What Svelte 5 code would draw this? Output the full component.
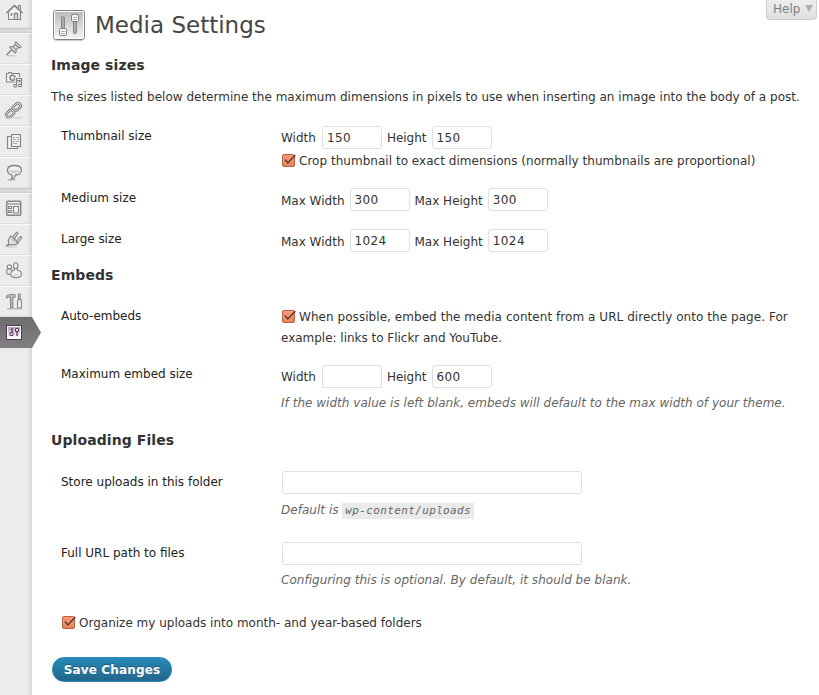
<script>
  const groups = [
    ['home'],
    ['pin', 'media', 'link', 'pages', 'comments'],
    ['appearance', 'plugins', 'users', 'tools', 'settings']
  ];
</script>

{#snippet check()}
  <svg class="check" width="14" height="13" viewBox="0 0 14 13" role="img" aria-label="checked">
    <defs><linearGradient id="orange" x2="0" y2="1"><stop stop-color="#fa9a76" /><stop offset="1" stop-color="#e8805a" /></linearGradient></defs>
    <rect x=".5" y=".5" width="12" height="12" rx="1.5" fill="url(#orange)" stroke="#b5623f" />
    <path d="M2.3 6 5.8 9.3 12.6 1.2" fill="none" stroke="#ffb090" stroke-width="2.8" />
    <path d="M2.8 5.7 5.8 9 13.2 1.2" fill="none" stroke="#6b3a2b" stroke-width="1.8" />
  </svg>
{/snippet}

{#snippet icon(name)}
  <svg class="icon" width="20" height="20" viewBox="0 0 20 20" fill="#f0f0f0" stroke="#858585" stroke-width="1.1" stroke-linejoin="round" aria-hidden="true">
    {#if name === 'home'}
      <path d="M4.5 9v8.5h12V9l-6-5.5z" /><path d="M14.5 6V3.5h2V8" /><path d="m2.5 11 8-7.5 8 7.5" fill="none" stroke-width="1.6" /><path d="M10.5 17v-5.500h3V17M7.500 11v3" fill="none" stroke-width="1.4" />
    {:else if name === 'pin'}
      <path d="M3 17.8h8" stroke="#bbb" /><path d="m2.5 17 5.5-5.500" stroke-width="1.5" /><path d="M5.500 9.200c1.500-1 2.700-.7 3.500-.4l2.300-2.300c-.4-1-.2-2 .6-2.700l5.300 5c-.8.9-1.800 1-2.800.7L12 11.800c.4 1.200.2 2.300-.8 3.200z" fill="#e4e4e4" /><path d="m9 8.800 3 3m-.7-5.300 3.100 3" fill="none" />
    {:else if name === 'media'}
      <path d="M2.5 4.5h2v-1h3v1h8V13h-13z" /><circle cx="8.5" cy="8.7" r="2.500" stroke-width="1.5" /><path d="M12.5 16.500V9.500h5V16" fill="none" stroke="#eee" stroke-width="3.200" /><path d="M12.500 16.500V9.500h5V16m-5-4.500h5" fill="none" stroke-width="1.200" /><ellipse cx="11.3" cy="16.7" rx="1.6" ry="1.300" /><ellipse cx="16.2" cy="16.4" rx="1.600" ry="1.300" />
    {:else if name === 'link'}
      <path d="M9 17.800h9" stroke="#ccc" />
      <g fill="none" stroke="#808080" stroke-width="2.800"><rect x="8.700" y="4.300" width="8.200" height="5.200" rx="2.600" transform="rotate(-42 12.800 6.900)" /><rect x="2" y="11" width="8.200" height="5.200" rx="2.600" transform="rotate(-42 6.100 13.600)" /></g>
      <g fill="none" stroke="#e4e4e4" stroke-width=".9"><rect x="8.700" y="4.300" width="8.200" height="5.200" rx="2.600" transform="rotate(-42 12.800 6.900)" /><rect x="2" y="11" width="8.200" height="5.200" rx="2.600" transform="rotate(-42 6.100 13.600)" /></g>
    {:else if name === 'pages'}
      <path d="M3.5 5.5h10v12h-10z" stroke-width="1.200" /><path d="M7.5 3.5h9v12h-9z" stroke-width="1.200" /><path d="M9 6.5h2m1 0h3m-6 2h3m1 0h2m-6 2h2m1 0h3m-6 2h4" stroke="#aaa" />
    {:else if name === 'comments'}
      <path d="M10.5 3.5c4.5 0 7 2.100 7 4.800s-2.800 4.600-6 4.700c-.4 2.100-2 4-4.500 4.500 1.300-1.400 1.500-2.500 1.300-4.300C5.500 12.600 3.500 10.900 3.500 8.300c0-2.700 2.500-4.800 7-4.800z" stroke-width="1.300" /><path d="M5 8.500c1 3.500 10 3.500 11 0z" fill="#ccc" stroke="none" /><path d="M3.500 17.800h8" stroke="#aaa" />
    {:else if name === 'appearance'}
      <rect x="2.7" y="3.2" width="14" height="14" rx="1" stroke-width="1.5" /><path d="M3.5 6h12.5" /><path d="M4.5 8.500h3v2h-3zm0 4h3v2h-3zm5-4h5v6.500h-5z" />
    {:else if name === 'plugins'}
      <path d="M2 16.5c3 1.200 2.300-3 4.800-2.800" fill="none" stroke-width="1.7" /><path d="m8.800 8.200 3.900-5 1.300 1.200-3.500 5.500zm3.700 3.600 4.200-4.500 1.300 1.200-3.800 5z" /><path d="M7 6.800 14.300 14c-1.900 1.500-4.800 2.400-7.700 1.600-.9.500-1.800.2-1.900-.8C3.900 12 4.800 9 7 6.800z" fill="#e2e2e2" /><path d="m7.500 10 3.200 3.200" stroke="#bbb" /><path d="M4 18h9" stroke="#ccc" />
    {:else if name === 'users'}
      <circle cx="5.4" cy="6.9" r="2.1" /><path d="M3 10.200c1.600-2 4.500-1.500 5 .7v3.200c-2.200.8-5.200.4-5.500-1.600z" /><path d="M10.300 7.500h3v2.700c3.200.3 4.500 2.500 4.100 4.700-.7 3.400-9 3.600-10.500.7-.8-2.400.4-5.100 3.400-5.400z" /><ellipse cx="11.700" cy="5.800" rx="2.200" ry="3" /><path d="M9 14.800h6" stroke="#ccc" />
    {:else if name === 'tools'}
      <path d="M2.5 5c1.500-1.700 4-2 8.500-1.200v2.400H8.800V17H6.500V6.300C4.700 5.800 3.600 6 2.500 7z" fill="#c4c4c4" /><path d="M14.500 3h1.600v5h-1.600zM14 8.500h3l.5 3.200V17h-4v-5.300z" /><path d="M3 17.800h15" stroke="#aaa" />
    {:else}
      <defs><linearGradient id="plum" x2="0" y2="1"><stop stop-color="#b99abb" /><stop offset="1" stop-color="#fff" /></linearGradient></defs>
      <g stroke="none"><rect x="2" y="2" width="16" height="15" rx="1" fill="#58305a" /><rect x="3" y="3" width="14" height="13" fill="#fff" /><rect x="4" y="4" width="12" height="11" fill="url(#plum)" /></g>
      <g stroke="#58305a" fill="#fff"><path d="M8 5v6m5-3v5" stroke-width="1.300" /><rect x="6" y="9.500" width="3" height="3" rx="1" /><rect x="11.500" y="5.500" width="3" height="3" rx="1" /></g>
    {/if}
  </svg>
{/snippet}

{#snippet size(name, value)}
  <label>{name}<input type="text" {value} /></label>
{/snippet}

<div class="page">
  <nav>
    {#each groups as group, i}
      {#if i}<div class="separator"></div>{/if}
      {#each group as name}
        <div class="item {name}" class:active={name === 'settings'}>{@render icon(name)}</div>
      {/each}
    {/each}
  </nav>
  <main>
    <button class="help">Help <i></i></button>
    <header>
      <svg width="34" height="34" viewBox="0 0 34 34" aria-hidden="true">
        <defs><linearGradient id="steel" x2="0" y2="1"><stop stop-color="#bbb" /><stop offset="1" stop-color="#f3f3f3" /></linearGradient></defs>
        <path d="M3 32.500h28" stroke="#ccc" />
        <rect x="1.5" y="2.5" width="31" height="29" rx="2" fill="#fff" stroke="#808080" />
        <rect x="3" y="4" width="28" height="26" fill="url(#steel)" />
        <g stroke="#858585"><rect x="9.5" y="8.500" width="3" height="13" rx="1" fill="#aaa" /><rect x="21.500" y="12.500" width="3" height="13" rx="1" fill="#aaa" /><rect x="7.500" y="20.500" width="7" height="7" rx="1.500" fill="#fff" /><rect x="19.500" y="6.500" width="7" height="7" rx="1.500" fill="#fff" /></g>
        <path d="M9 23.500h4m-4 2h4M21 9.500h4m-4 2h4" stroke="#aaa" />
      </svg>
      <h1>Media Settings</h1>
    </header>

    <h2>Image sizes</h2>
    <p class="intro">The sizes listed below determine the maximum dimensions in pixels to use when inserting an image into the body of a post.</p>
    <section class="row thumb">
      <h3>Thumbnail size</h3>
      <div>
        <div class="fields short">{@render size('Width', '150')}{@render size('Height', '150')}</div>
        <div class="option">{@render check()}Crop thumbnail to exact dimensions (normally thumbnails are proportional)</div>
      </div>
    </section>
    <section class="row medium">
      <h3>Medium size</h3>
      <div class="fields">{@render size('Max Width', '300')}{@render size('Max Height', '300')}</div>
    </section>
    <section class="row large">
      <h3>Large size</h3>
      <div class="fields">{@render size('Max Width', '1024')}{@render size('Max Height', '1024')}</div>
    </section>

    <h2>Embeds</h2>
    <section class="row auto">
      <h3>Auto-embeds</h3>
      <div class="option wrapped">{@render check()}When possible, embed the media content from a URL directly onto the page. For<br /><span>example: links to Flickr and YouTube.</span></div>
    </section>
    <section class="row embed">
      <h3>Maximum embed size</h3>
      <div>
        <div class="fields short">{@render size('Width', '')}{@render size('Height', '600')}</div>
        <p class="note">If the width value is left blank, embeds will default to the max width of your theme.</p>
      </div>
    </section>

    <h2>Uploading Files</h2>
    <section class="row store">
      <h3>Store uploads in this folder</h3>
      <div>
        <input class="wide" type="text" aria-label="Store uploads in this folder" />
        <p class="note">Default is <code>wp-content/uploads</code></p>
      </div>
    </section>
    <section class="row url">
      <h3>Full URL path to files</h3>
      <div>
        <input class="wide" type="text" aria-label="Full URL path to files" />
        <p class="note">Configuring this is optional. By default, it should be blank.</p>
      </div>
    </section>
    <div class="option organize">{@render check()}Organize my uploads into month- and year-based folders</div>
    <button class="save">Save Changes</button>
  </main>
</div>

<style>
  :global(body) { margin: 0; background: #fff; }
  .page { display: flex; width: 819px; height: 695px; overflow: hidden; font: 12px/20px "DejaVu Sans", sans-serif; color: #333; }
  * { box-sizing: border-box; }
  nav { width: 32px; flex: none; background: linear-gradient(90deg, #ececec 27px, #e3e3e3 29px, #d5d5d5 32px); }
  .item { height: 31px; width: 31px; border-top: 1px solid #f9f9f9; border-bottom: 1px solid #dedede; padding: 4px 0 0 4px; }
  .item.home { height: 28px; padding-top: 2px; border-top: 0; }
  .separator { height: 5px; background: #dadada; border-top: 1px solid #c8c8c8; border-bottom: 1px solid #ccc; }
  .icon { display: block; }
  .item.active { width: 41px; border: 0; padding-top: 6px; background: linear-gradient(#6d6d6d, #808080); clip-path: polygon(0 0, 32px 0, 41px 50%, 32px 100%, 0 100%); position: relative; }
  main { flex: 1; padding-left: 19px; position: relative; }
  header { display: flex; height: 50px; padding: 8px 0 0 1px; }
  h1 { margin: 0 0 0 9px; font-size: 23px; line-height: 34px; font-weight: 400; color: #464646; }
  h2 { margin: 0; font-size: 14px; line-height: 30px; height: 30px; letter-spacing: .08px; }
  h3 { margin: 0; width: 220px; flex: none; font-size: 12px; line-height: 20px; font-weight: 400; color: #222; }
  p { margin: 0; white-space: nowrap; }
  .intro { height: 34px; line-height: 34px; letter-spacing: .008px; }
  .row { display: flex; padding: 12px 0 0 10px; }
  .thumb { height: 62px; }
  .medium { height: 41px; }
  .large { height: 43px; }
  .large h3 { letter-spacing: -.03px; }
  .auto { height: 58px; margin-top: 4px; }
  .embed { height: 73px; }
  .store { height: 71px; margin-top: 5px; }
  .url { height: 82px; }
  .fields { display: flex; gap: 5px; height: 23px; }
  .fields label { display: flex; gap: 5px; line-height: 26px; white-space: nowrap; }
  .fields.short label { line-height: 25px; }
  .fields.short label:first-child { gap: 6px; }
  input { width: 60px; height: 23px; margin: 0; border: 1px solid #dfdfdf; border-radius: 3px; padding: 1px 4px; font: 12px "DejaVu Sans", sans-serif; letter-spacing: .4px; color: #333; background: #fff; outline: 0; }
  .wide { display: block; width: 300px; margin: -1px 0 0 1px; }
  .embed .fields { margin-top: 1px; }
  .option { white-space: nowrap; }
  .thumb .option { margin-top: 2px; letter-spacing: .028px; }
  .wrapped { line-height: 21px; padding-top: 1px; letter-spacing: .053px; }
  .wrapped span { letter-spacing: -.02px; }
  .check { margin: 0 3px 0 1px; vertical-align: -2px; }
  .note { font-style: italic; color: #666; margin-top: 5px; letter-spacing: .027px; }
  .store .note { margin-top: 6px; }
  code { background: #eaeaea; padding: 1px 3px 2px; font: italic 11px "DejaVu Sans Mono", monospace; letter-spacing: .36px; }
  .organize { padding-left: 10px; height: 20px; }
  button { font-family: "DejaVu Sans", sans-serif; margin: 0; }
  .save { display: block; width: 120px; height: 25px; margin: 24px 0 0 1px; padding: 0; border: 1px solid #298cba; border-radius: 12px; color: #fff; font-weight: 700; font-size: 12px; letter-spacing: .15px; background: linear-gradient(#278ab7, #22668a); text-shadow: 0 -1px 0 rgba(0,0,0,.3); }
  .help { position: absolute; right: 2px; top: 0; width: 51px; height: 20px; border: 1px solid #ccc; border-top: 0; border-radius: 0 0 4px 4px; background: linear-gradient(#eee, #dfdfdf); color: #808080; font-size: 12px; line-height: 17px; padding: 0 0 1px 6px; display: flex; align-items: center; gap: 5px; }
  .help i { border: 4px solid transparent; border-top: 7px solid #b0b0b0; border-bottom: 0; margin-top: -2px; }
</style>
